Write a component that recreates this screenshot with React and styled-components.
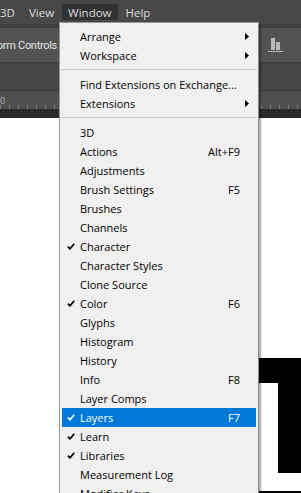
import React from "react";
import styled, { createGlobalStyle } from "styled-components";

const GlobalStyle = createGlobalStyle`
  html, body {
    margin: 0;
    padding: 0;
    background: #ffffff;
  }
  body {
    font-family: "Open Sans", "Noto Sans", sans-serif;
    overflow: hidden;
  }
`;

const menuItems = [
    { label: "Arrange", sub: true },
    { label: "Workspace", sub: true },
    { sep: true },
    { label: "Find Extensions on Exchange..." },
    { label: "Extensions", sub: true },
    { sep: true },
    { label: "3D" },
    { label: "Actions", key: "Alt+F9" },
    { label: "Adjustments" },
    { label: "Brush Settings", key: "F5" },
    { label: "Brushes" },
    { label: "Channels" },
    { label: "Character", checked: true },
    { label: "Character Styles" },
    { label: "Clone Source" },
    { label: "Color", checked: true, key: "F6" },
    { label: "Glyphs" },
    { label: "Histogram" },
    { label: "History" },
    { label: "Info", key: "F8" },
    { label: "Layer Comps" },
    { label: "Layers", checked: true, key: "F7", active: true },
    { label: "Learn", checked: true },
    { label: "Libraries", checked: true },
    { label: "Measurement Log" },
    { label: "Modifier Keys" },
];

const App = () => {
    return (
        <Screen>
            <GlobalStyle />
            <MenuBar>
                <TopItem>3D</TopItem>
                <TopItem>View</TopItem>
                <TopItem open>Window</TopItem>
                <TopItem>Help</TopItem>
            </MenuBar>
            <BarGap />
            <OptionsBar>
                <ClipLabel>
                    <span>Show Transform Controls</span>
                </ClipLabel>
                <DistIcon width="16" height="15" viewBox="0 0 16 15">
                    <rect x="3" y="0" width="4" height="12" fill="#b9b9b9" />
                    <rect x="8" y="4" width="4" height="8" fill="#b9b9b9" />
                    <rect x="0" y="13" width="15" height="1" fill="#b9b9b9" />
                </DistIcon>
            </OptionsBar>
            <TabStrip />
            <Ruler>
                <RulerNum>0</RulerNum>
            </Ruler>
            <RulerShade />
            <Canvas>
                <Glyph>
                    <GlyphL />
                </Glyph>
            </Canvas>

            <Dropdown>
                {menuItems.map((item, i) =>
                    item.sep ? (
                        <Separator key={i} />
                    ) : (
                        <Row key={i} active={item.active}>
                            <Check>
                                {item.checked && (
                                    <svg width="8" height="7" viewBox="0 0 8 7">
                                        <path
                                            d="M0.8 3.6 L3 5.8 L7.2 0.8"
                                            fill="none"
                                            stroke="currentColor"
                                            strokeWidth="1.7"
                                        />
                                    </svg>
                                )}
                            </Check>
                            <Label>{item.label}</Label>
                            {item.key && <Shortcut>{item.key}</Shortcut>}
                            {item.sub && (
                                <Arrow width="4" height="7" viewBox="0 0 4 7">
                                    <path d="M0 0 L4 3.5 L0 7 Z" fill="#000" />
                                </Arrow>
                            )}
                        </Row>
                    )
                )}
            </Dropdown>
        </Screen>
    );
};

export default App;

const Screen = styled.div`
    position: relative;
    width: 301px;
    height: 493px;
    display: flex;
    flex-direction: column;
    overflow: hidden;
    background: #ffffff;
`;

const MenuBar = styled.div`
    height: 24px;
    display: flex;
    align-items: center;
    gap: 2px;
    margin-left: -6px;
    background: #484848;
`;

const TopItem = styled.div`
    height: 16px;
    padding: 0 6px;
    display: flex;
    align-items: center;
    font-size: 11.5px;
    color: #dddddd;
    background: ${(p) => (p.open ? "#323232" : "transparent")};
`;

const BarGap = styled.div`
    height: 4px;
    background: #404040;
`;

const OptionsBar = styled.div`
    height: 34px;
    display: flex;
    align-items: center;
    justify-content: space-between;
    padding-right: 17px;
    background: #535353;
    border-bottom: 1px solid #3c3c3c;
`;

const ClipLabel = styled.div`
    width: 57px;
    display: flex;
    justify-content: flex-end;
    overflow: hidden;
    white-space: nowrap;
    font-family: Roboto, "Open Sans", sans-serif;
    font-size: 11px;
    letter-spacing: -0.3px;
    color: #e4e4e4;
`;

const DistIcon = styled.svg`
    display: block;
`;

const TabStrip = styled.div`
    height: 27px;
    background: #464646;
    border-bottom: 1px solid #3a3a3a;
`;

const Ruler = styled.div`
    height: 18px;
    display: flex;
    align-items: center;
    background-color: #4f4f4f;
    background-image: repeating-linear-gradient(
        to right,
        #7a7a7a 0,
        #7a7a7a 1px,
        transparent 1px,
        transparent 9px
    );
    background-size: 100% 4px;
    background-position: 0 100%;
    background-repeat: repeat-x;
`;

const RulerNum = styled.span`
    font-size: 9px;
    color: #b0b0b0;
`;

const RulerShade = styled.div`
    height: 9px;
    background: #2c2c2c;
`;

const Canvas = styled.div`
    flex: 1;
    display: flex;
    justify-content: flex-end;
    padding-top: 240px;
    background: #ffffff;
`;

const Glyph = styled.div`
    width: 43px;
    padding: 25px 0 0 1px;
    background: #000000;
`;

const GlyphL = styled.div`
    height: 90px;
    border-left: 20px solid #ffffff;
    border-bottom: 18px solid #ffffff;
    border-top-left-radius: 2px;
`;

const Dropdown = styled.div`
    position: absolute;
    left: 59px;
    top: 22px;
    width: 198px;
    padding: 4px 0 0;
    background: #f0f0f0;
    border: 1px solid #979797;
    border-right-color: #8a8a8a;
    box-shadow: 2px 2px 2px rgba(0, 0, 0, 0.35);
`;

const Separator = styled.div`
    height: 1px;
    margin: 4px 1px 5px;
    background: #cdcdcd;
`;

const Row = styled.div`
    height: 19px;
    margin: 0 2px;
    display: flex;
    align-items: center;
    font-size: 11px;
    color: ${(p) => (p.active ? "#ffffff" : "#000000")};
    background: ${(p) => (p.active ? "#0078d7" : "transparent")};
`;

const Check = styled.div`
    width: 16px;
    padding-left: 5px;
    display: flex;
    align-items: center;
    box-sizing: border-box;
    margin-right: 2px;
`;

const Label = styled.span`
    flex: 1;
    white-space: nowrap;
`;

const Shortcut = styled.span`
    margin-right: 16px;
`;

const Arrow = styled.svg`
    display: block;
    margin-right: 7px;
`;
